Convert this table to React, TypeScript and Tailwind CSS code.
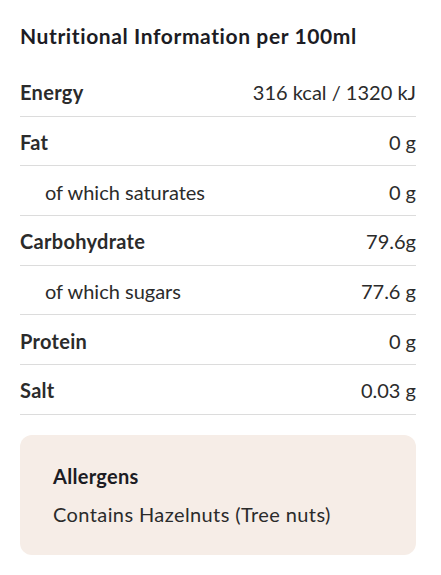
const rows = [
  { label: 'Energy', value: '316 kcal / 1320 kJ', sub: false },
  { label: 'Fat', value: '0 g', sub: false },
  { label: 'of which saturates', value: '0 g', sub: true },
  { label: 'Carbohydrate', value: '79.6g', sub: false },
  { label: 'of which sugars', value: '77.6 g', sub: true },
  { label: 'Protein', value: '0 g', sub: false },
  { label: 'Salt', value: '0.03 g', sub: false },
];

export default function App() {
  return (
    <div className="w-[441px] h-[575px] bg-white pl-5 pr-[25px] pt-[23px] font-['Lato',sans-serif] text-[#2b2b2b]">
      <h2 className="text-[21px] leading-[26px] font-bold tracking-[0.6px] text-[#1c1c24]">Nutritional Information per 100ml</h2>

      {/* Table */}
      <div className="mt-[18px]">
        {rows.map((row) => (
          <div
            key={row.label}
            className="flex items-center justify-between h-[49.7px] pt-[2px] border-b border-[#dcdcdc] text-[20px]"
          >
            <span className={row.sub ? 'pl-[25px]' : 'font-bold tracking-[0.3px]'}>{row.label}</span>
            <span>{row.value}</span>
          </div>
        ))}
      </div>

      {/* Allergens */}
      <div className="mt-5 h-[120px] rounded-xl bg-[#f6ede7] px-[33px] pt-[29px]">
        <div className="text-[20px] leading-6 font-bold tracking-[0.3px] text-[#1c1c24]">Allergens</div>
        <div className="mt-[14px] text-[20px] leading-6 tracking-[0.4px]">Contains Hazelnuts (Tree nuts)</div>
      </div>
    </div>
  );
}
